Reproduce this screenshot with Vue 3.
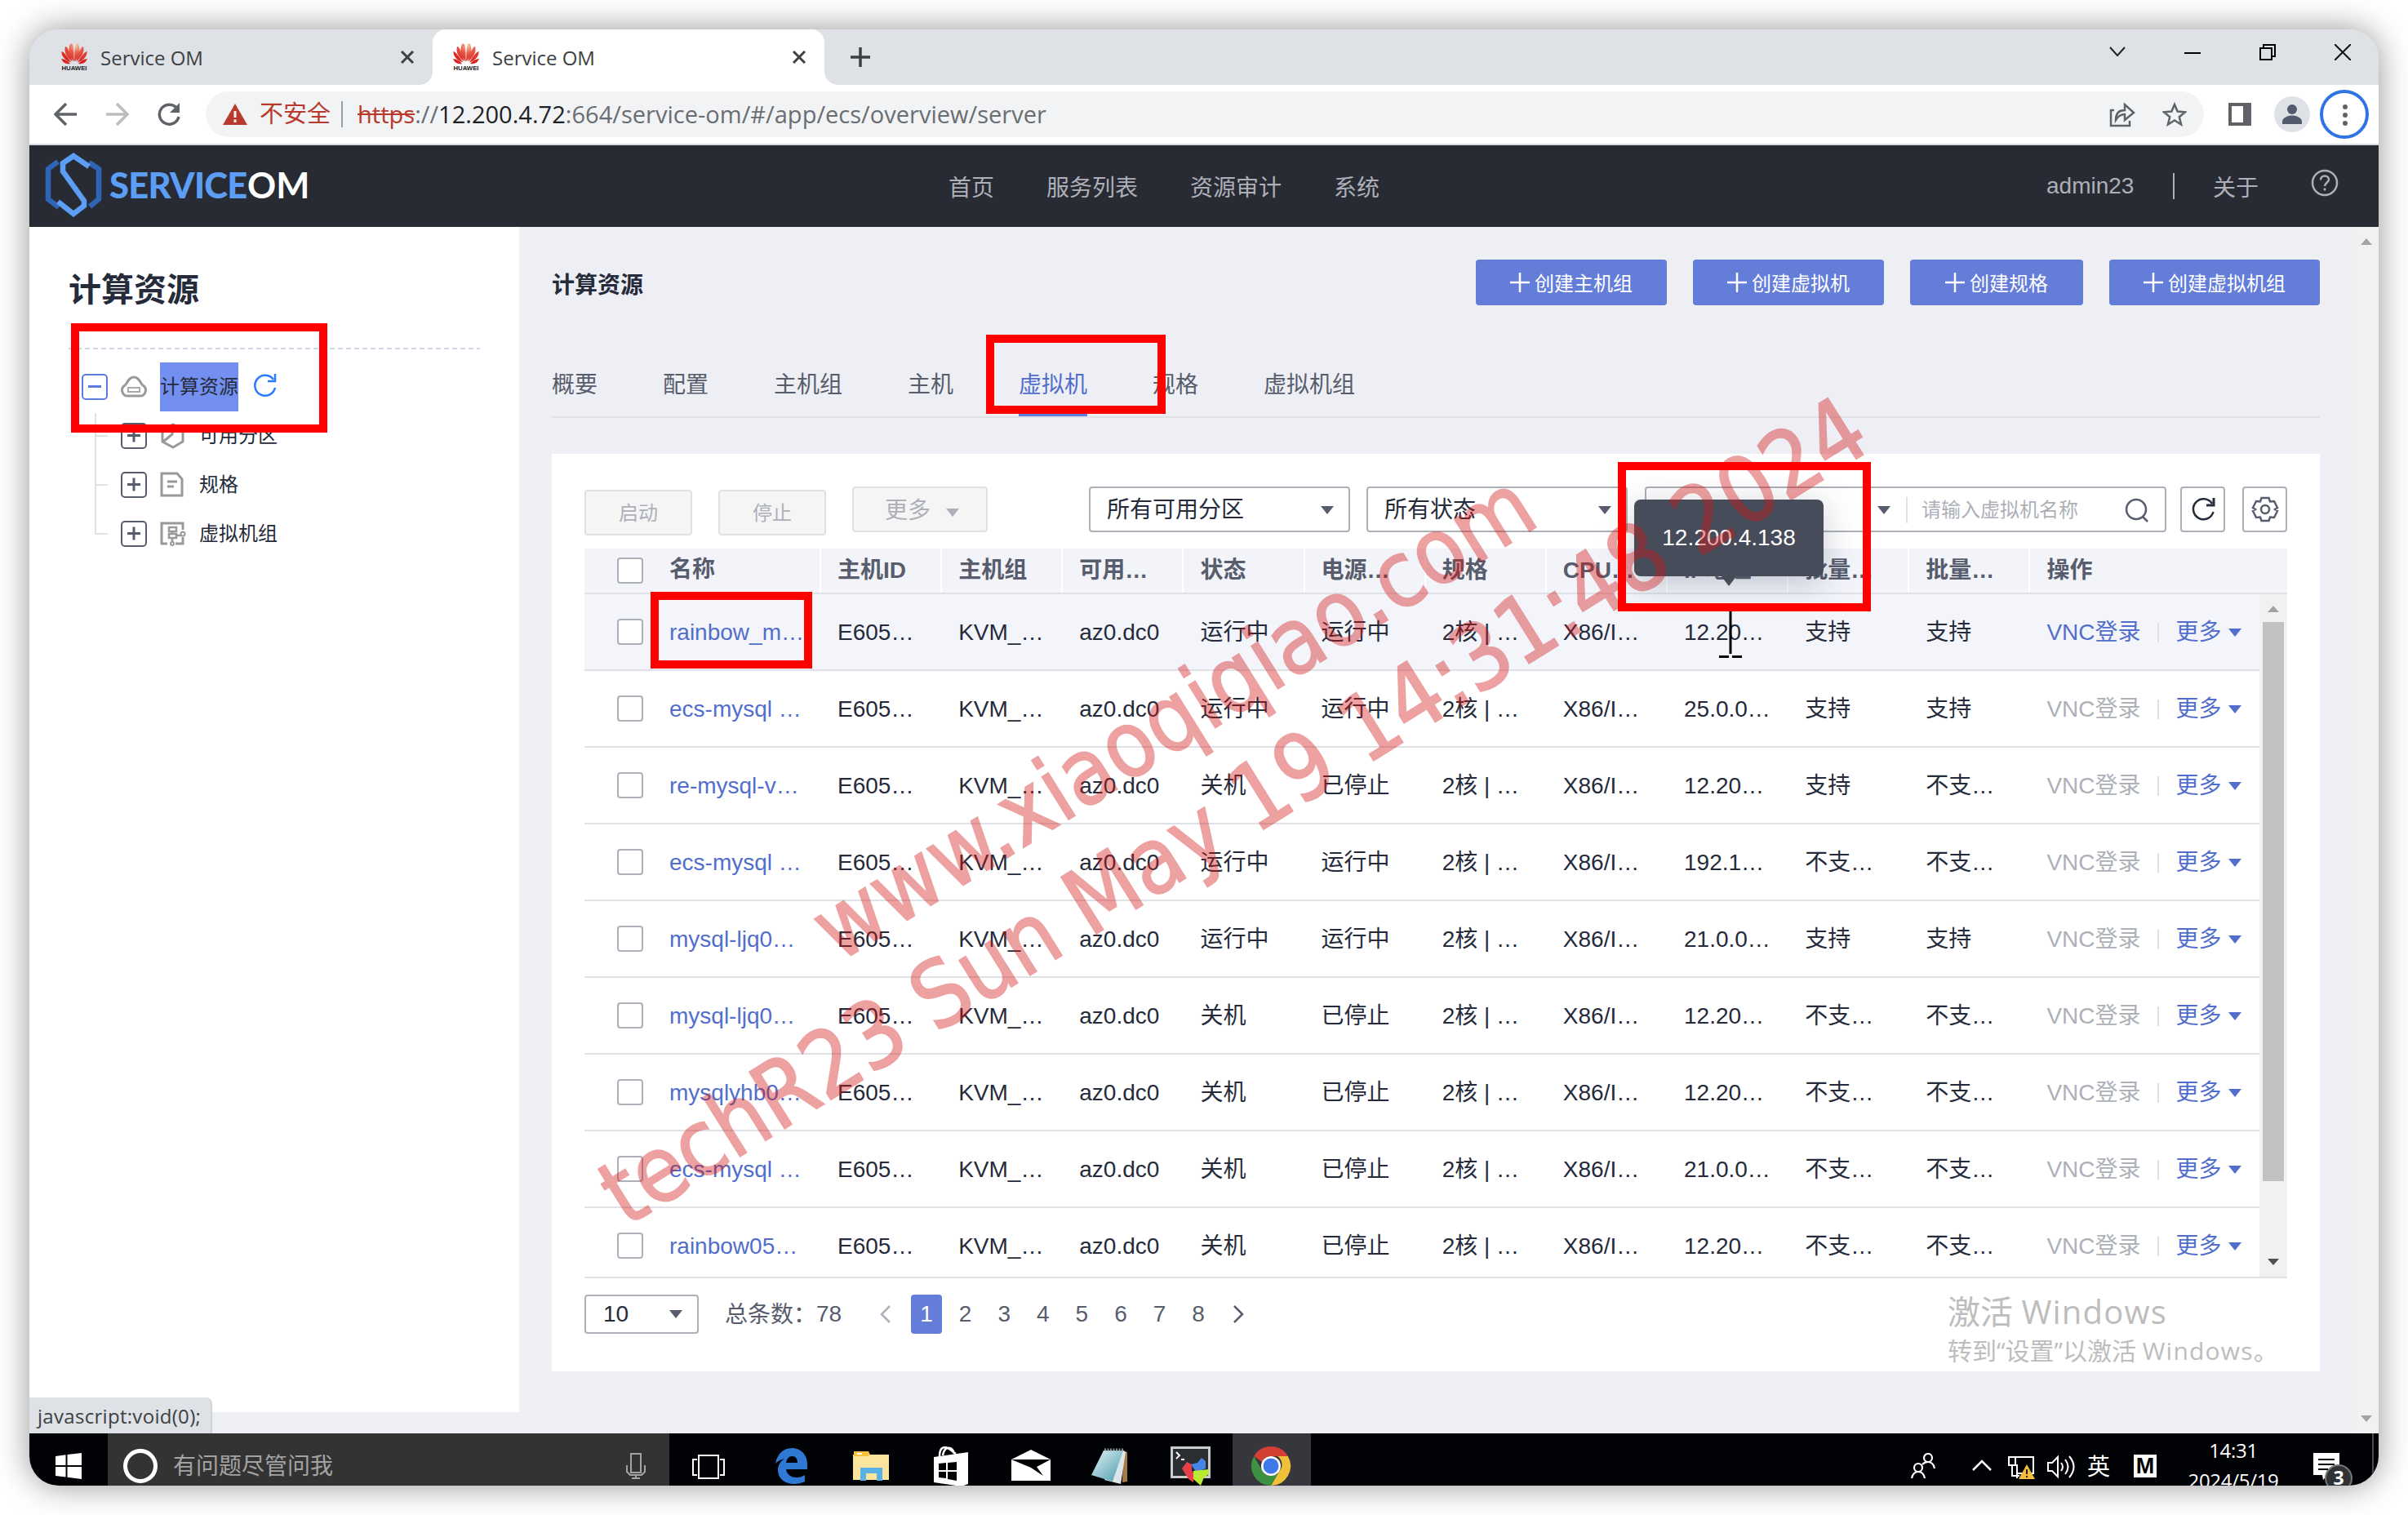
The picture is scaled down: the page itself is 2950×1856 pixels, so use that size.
<script setup>
const browserTabs = [
  { title: 'Service OM', active: false },
  { title: 'Service OM', active: true },
]
const nav = ['首页', '服务列表', '资源审计', '系统']
const actions = ['创建主机组', '创建虚拟机', '创建规格', '创建虚拟机组']
const tabs = ['概要', '配置', '主机组', '主机', '虚拟机', '规格', '虚拟机组']
const tree = [
  { label: '可用分区', icon: 'zone' },
  { label: '规格', icon: 'spec' },
  { label: '虚拟机组', icon: 'group' },
]
const heads = ['主机ID', '主机组', '可用…', '状态', '电源…', '规格', 'CPU…', 'IP地址', '批量…', '批量…']
const make = (name, on, ip, a, b) => ({
  name,
  cells: ['E605…', 'KVM_…', 'az0.dc0', on ? '运行中' : '关机', on ? '运行中' : '已停止', '2核 | …', 'X86/I…', ip, a, b],
})
const rows = [
  make('rainbow_m…', true, '12.20…', '支持', '支持'),
  make('ecs-mysql …', true, '25.0.0…', '支持', '支持'),
  make('re-mysql-v…', false, '12.20…', '支持', '不支…'),
  make('ecs-mysql …', true, '192.1…', '不支…', '不支…'),
  make('mysql-ljq0…', true, '21.0.0…', '支持', '支持'),
  make('mysql-ljq0…', false, '12.20…', '不支…', '不支…'),
  make('mysqlyhb0…', false, '12.20…', '不支…', '不支…'),
  make('ecs-mysql …', false, '21.0.0…', '不支…', '不支…'),
  make('rainbow05…', false, '12.20…', '不支…', '不支…'),
]
</script>

<template>
  <div class="stage">
    <div class="window">
      <!-- tab strip -->
      <div class="strip">
        <div v-for="(t, i) in browserTabs" :key="i" class="btab" :class="{ active: t.active }">
          <svg class="fav" width="34" height="34" viewBox="0 0 34 34">
            <defs>
              <radialGradient id="hw" gradientUnits="userSpaceOnUse" cx="19" cy="3" r="20">
                <stop offset="0" stop-color="#f6c9a4" /><stop offset=".45" stop-color="#ea5a48" /><stop offset="1" stop-color="#d5271f" />
              </radialGradient>
            </defs>
            <path fill="url(#hw)" d="M16 22C11 15 9 8 12 1c3-2 5 1 4.600 21zM18 22C23 15 25 8 22 1c-3-2-5 1-4.600 21zM14.500 22.500C8 17 4 11 6 4c3 0 6 8 8.500 18.500zM19.500 22.500C26 17 30 11 28 4c-3 0-6 8-8.500 18.500zM13 23.500C6 21 1 16 1.500 10 5 11 9 17 13 23.500zM21 23.500C28 21 33 16 32.500 10 29 11 25 17 21 23.500zM12 25C7 26 3 24 1 19c4 0 8 2.500 11 6zM22 25c5 1 9-1 11-6-4 0-8 2.500-11 6z" />
            <text x="17" y="32.500" text-anchor="middle" textLength="31" lengthAdjust="spacingAndGlyphs" class="favtext">HUAWEI</text>
          </svg>
          <span class="btitle">{{ t.title }}</span>
          <svg class="bclose" width="16" height="16" viewBox="0 0 16 16"><path d="M1 1l14 14M15 1L1 15" stroke="#3c4043" stroke-width="3" /></svg>
        </div>
        <svg class="plus" width="24" height="24" viewBox="0 0 24 24"><path d="M12 0v24M0 12h24" stroke="#3c4043" stroke-width="3.500" /></svg>
        <div class="wctl">
          <svg width="20" height="20" viewBox="0 0 20 20"><path d="M1 4l9 10 9-10" fill="none" stroke="#222" stroke-width="2" /></svg>
          <svg width="20" height="20" viewBox="0 0 20 20"><path d="M0 11h20" stroke="#000" stroke-width="2" /></svg>
          <svg width="20" height="20" viewBox="0 0 20 20"><path d="M1 5h14v14H1zM5 5V1h14v14h-4" fill="none" stroke="#000" stroke-width="2" /></svg>
          <svg width="20" height="20" viewBox="0 0 20 20"><path d="M0 0l20 20M20 0L0 20" stroke="#111" stroke-width="2" /></svg>
        </div>
      </div>

      <!-- address bar -->
      <div class="toolbar">
        <svg class="back" width="28" height="28" viewBox="0 0 28 28"><path d="M28 14H3M15 1L2 14l13 13" fill="none" stroke="#5f6368" stroke-width="3.500" /></svg>
        <svg class="fwd" width="28" height="28" viewBox="0 0 28 28"><path d="M0 14h25M13 1l13 13-13 13" fill="none" stroke="#bbbdc0" stroke-width="3.500" /></svg>
        <svg class="rel" width="30" height="30" viewBox="0 0 30 30"><path d="M25 8A12 12 0 1 0 27 18" fill="none" stroke="#5f6368" stroke-width="3.500" /><path d="M28 1v12H16z" fill="#5f6368" /></svg>
        <div class="omni">
          <svg class="warn" width="30" height="26" viewBox="0 0 30 26"><path d="M15 0L30 26H0z" fill="#b93a2c" /><path d="M15 9v8M15 19.500v3.500" stroke="#f1f3f4" stroke-width="3" /></svg>
          <span class="unsafe">不安全</span>
          <i class="osep"></i>
          <span class="url"><s>https</s>://<b>12.200.4.72</b>:664/service-om/#/app/ecs/overview/server</span>
          <svg class="share" width="32" height="32" viewBox="0 0 32 32"><path d="M6 11H2v19h23v-6M8 23c0-9 5-12 11-12V4l11 10-11 9v-7c-5 0-8 2-11 7z" fill="none" stroke="#5f6368" stroke-width="2.500" /></svg>
          <svg class="star" width="30" height="30" viewBox="0 0 30 30"><path d="M15 3l3.600 8.600 9.400.7-7.200 6 2.300 9.200-8.100-5-8.100 5 2.300-9.200-7.200-6 9.400-.7z" fill="none" stroke="#5f6368" stroke-width="2.500" /></svg>
        </div>
        <svg class="panel" width="28" height="28" viewBox="0 0 28 28"><path d="M2 2h24v24H2z" fill="none" stroke="#5f6368" stroke-width="4" /><path d="M18 2h8v24h-8z" fill="#5f6368" /></svg>
        <svg class="avatar" width="44" height="44" viewBox="0 0 44 44"><circle cx="22" cy="22" r="22" fill="#dee1e6" /><circle cx="22" cy="16" r="6" fill="#525c6e" /><path d="M10 34v-3c0-5 7-7.500 12-7.500S34 26 34 31v3z" fill="#525c6e" /></svg>
        <svg class="menu" width="60" height="60" viewBox="0 0 60 60"><circle cx="30" cy="30" r="28" fill="#fff" stroke="#2e74e5" stroke-width="4" /><circle cx="31" cy="21" r="3" fill="#5f6368" /><circle cx="31" cy="31" r="3" fill="#5f6368" /><circle cx="31" cy="41" r="3" fill="#5f6368" /></svg>
      </div>

      <!-- application header -->
      <header class="head">
        <svg class="logo" width="72" height="80" viewBox="0 0 72 80">
          <path d="M17 12L5 21v37l13 10" fill="none" stroke="#2e66b5" stroke-width="6.500" />
          <path d="M55 13l12 8v37L56 67" fill="none" stroke="#2e66b5" stroke-width="6.500" />
          <path d="M55 18L36 5 23 14v10l26 36v6L36 76 17 61" fill="none" stroke="#5c9df5" stroke-width="6.500" />
        </svg>
        <span class="brand"><b>SERVICE</b><i>OM</i></span>
        <nav><a v-for="n in nav" :key="n">{{ n }}</a></nav>
        <span class="user">admin23</span>
        <i class="hsep"></i>
        <span class="about">关于</span>
        <svg class="help" width="34" height="34" viewBox="0 0 34 34"><circle cx="17" cy="17" r="15" fill="none" stroke="#adb0b8" stroke-width="2.500" /><path d="M12 13.500c0-3 2-5 5-5s5 2 5 4.500c0 3.500-5 4-5 8M17 23.500v3" fill="none" stroke="#adb0b8" stroke-width="2.500" /></svg>
      </header>

      <div class="body">
        <aside>
          <h1>计算资源</h1>
          <div class="dash"></div>
          <div class="tree">
            <div class="node root">
              <span class="tog minus"></span>
              <svg class="nico" width="32" height="32" viewBox="0 0 32 32"><path d="M9 27a7 7 0 0 1-4-13C8 12 9 4 16 4s8 8 11 10a7 7 0 0 1-4 13z" fill="none" stroke="#999" stroke-width="3" /><path d="M9 17h14v5H9z" fill="none" stroke="#aaa" stroke-width="2" /></svg>
              <span class="lbl sel">计算资源</span>
              <svg class="rico" width="30" height="30" viewBox="0 0 30 30"><path d="M26 8A12.500 12.500 0 1 0 28 18" fill="none" stroke="#2b7bff" stroke-width="2.500" /><path d="M28 1v9h-9" fill="none" stroke="#2b7bff" stroke-width="2.500" /></svg>
            </div>
            <div v-for="n in tree" :key="n.label" class="node child">
              <span class="tog"></span>
              <svg class="nico" width="32" height="32" viewBox="0 0 32 32" fill="none" stroke="#999" stroke-width="3">
                <path v-if="n.icon === 'zone'" d="M16 2L3 8v15l13 7 12-7V8zM4 23l11-9V2" />
                <template v-else-if="n.icon === 'spec'"><path d="M2 2h19l6 7v20H2z" /><path d="M9 12h12M9 18h8" /></template>
                <template v-else><path d="M9 28H2V3h26v8M28 20v8h-9" /><path d="M11 8h9v5h-9zM11 16h9v5h-9zM15 13v3M15 21v6M20 18h6" stroke-width="2.500" /><circle cx="15" cy="28" r="2" stroke-width="2" /><circle cx="28" cy="16" r="2.500" stroke-width="2" /></template>
              </svg>
              <span class="lbl">{{ n.label }}</span>
            </div>
          </div>
        </aside>

        <main>
          <div class="top">
            <h2>计算资源</h2>
            <div class="acts">
              <button v-for="a in actions" :key="a"><svg width="24" height="24" viewBox="0 0 24 24"><path d="M12 0v24M0 12h24" stroke="#fff" stroke-width="2.500" /></svg>{{ a }}</button>
            </div>
          </div>
          <div class="tabs"><span v-for="t in tabs" :key="t" :class="{ on: t === '虚拟机' }">{{ t }}</span></div>

          <section class="card">
            <div class="tools">
              <span class="btn b1">启动</span>
              <span class="btn b1 b2">停止</span>
              <span class="btn b3">更多<i class="car"></i></span>
              <span class="select s1">所有可用分区<i class="car"></i></span>
              <span class="select s2">所有状态<i class="car"></i></span>
              <span class="search">
                <i class="car"></i><i class="vsep"></i><span class="ph">请输入虚拟机名称</span>
                <svg width="32" height="32" viewBox="0 0 32 32"><circle cx="15" cy="15" r="12" fill="none" stroke="#575d6c" stroke-width="2.500" /><path d="M23 24l6 6" stroke="#575d6c" stroke-width="2.500" /></svg>
              </span>
              <span class="sq q1"><svg width="30" height="30" viewBox="0 0 30 30"><path d="M26 8A12.500 12.500 0 1 0 27.500 18" fill="none" stroke="#252b3a" stroke-width="2.500" /><path d="M28 1v9h-9" fill="none" stroke="#252b3a" stroke-width="3" /></svg></span>
              <span class="sq q2"><svg width="34" height="34" viewBox="0 0 34 34" fill="none" stroke="#575d6c" stroke-width="2.500"><path d="M12.500 3h9l1.500 4.500 5-.5 4 8-3 2 3 2-4 8-5-.5-1.500 4.500h-9L11 26.500 6 27l-4-8 3-2-3-2 4-8 5 .5z" /><circle cx="17" cy="17" r="5" /></svg></span>
            </div>

            <div class="table">
              <div class="tr th">
                <div class="c0"><i class="cb"></i><span>名称</span></div>
                <div v-for="(h, i) in heads" :key="i" class="td">{{ h }}</div>
                <div class="td op">操作</div>
              </div>
              <div class="scroll">
                <div class="rows">
                  <div v-for="(r, i) in rows" :key="i" class="tr" :class="{ hot: i === 0 }">
                    <div class="c0"><i class="cb"></i><a>{{ r.name }}</a></div>
                    <div v-for="(c, j) in r.cells" :key="j" class="td">{{ c }}</div>
                    <div class="td op"><a class="vnc">VNC登录</a><i class="osp"></i><a>更多</a><i class="car"></i></div>
                  </div>
                </div>
                <div class="bar"><i class="up"></i><i class="thumb"></i><i class="down"></i></div>
              </div>
            </div>

            <div class="pager">
              <span class="size">10<i class="car"></i></span>
              <span class="total">总条数：</span><span class="cnt">78</span>
              <svg class="pv" width="16" height="22" viewBox="0 0 16 22"><path d="M13 1L3 11l10 10" fill="none" stroke="#adb0b8" stroke-width="2.500" /></svg>
              <span v-for="p in 8" :key="p" class="pg" :class="{ cur: p === 1 }">{{ p }}</span>
              <svg class="nx" width="16" height="22" viewBox="0 0 16 22"><path d="M3 1l10 10L3 21" fill="none" stroke="#575d6c" stroke-width="2.500" /></svg>
            </div>
          </section>
        </main>
        <div class="pagebar"><i class="up"></i><i class="down"></i></div>
        <div class="status">javascript:void(0);</div>
      </div>

      <!-- taskbar -->
      <footer class="task">
        <svg class="win" width="32" height="32" viewBox="0 0 32 32" fill="#fff"><path d="M0 4l12.500-1.700V15H0zM14.500 2L32 0v15H14.500zM0 17h12.500v12.500L0 28zM14.500 17H32v15l-17.500-2.200z" /></svg>
        <div class="cortana">
          <svg width="44" height="44" viewBox="0 0 44 44"><circle cx="22" cy="22" r="18.500" fill="none" stroke="#fff" stroke-width="5" /></svg>
          <span>有问题尽管问我</span>
          <svg class="mic" width="24" height="32" viewBox="0 0 24 32" fill="none" stroke="#a3a3a3" stroke-width="2"><path d="M6 1h12v23H6zM1 15v8l4 4h14l4-4v-8M12 27v4M7 31h10" /></svg>
        </div>
        <svg class="tv" width="40" height="30" viewBox="0 0 40 30" fill="none" stroke="#fff" stroke-width="2"><path d="M8 1h24v28H8zM6 6H1v19h5M34 6h5v19h-5" /></svg>
        <svg class="i1" width="40" height="44" viewBox="0 0 40 44"><path fill="#2f78d4" d="M1 19C3 7 11 0 21 0c12 0 19 9 19 20v6H14c1 7 7 10 13 10 4 0 7-1 10-3v8c-4 2-8 3-13 3C12 44 4 37 4 27c0-6 3-11 8-14-5 1-8 3-11 6zM14 18h14c0-5-2-8-6.500-8S15 13 14 18z" /></svg>
        <svg class="i2" width="44" height="36" viewBox="0 0 44 36"><path fill="#f9c23c" d="M1 0h18v8H1z" /><path fill="#fbe49b" d="M0 4h44v31H0z" /><path fill="#f9c23c" d="M1 0h18l2 4-3 2H1z" /><path fill="#fff" d="M5 2h6v2H5z" /><path fill="#5ab1e6" d="M9 20h27v16h-7v-9H16v9H9z" /></svg>
        <svg class="i3" width="44" height="48" viewBox="0 0 44 48"><path fill="none" stroke="#fff" stroke-width="2.500" d="M8 12C8 4 11 1 15 1s8 5 13 8M12 11c2-12 12-12 14-2" /><path fill="#fff" d="M1 13l42-6v39l-8 3L1 44z" /><path fill="#000" d="M7 21l9-1v9H7zM18 20l11-1v10H18zM7 31h9v8l-9-1zM18 31h11v11l-11-2z" /></svg>
        <svg class="i4" width="48" height="38" viewBox="0 0 48 38"><path fill="#fff" d="M24 0l22 11 2 1v26H0V12z" /><path fill="#000" d="M0 12h48L31 21l8 11-15-10z" /></svg>
        <svg class="i5" width="46" height="44" viewBox="0 0 46 44"><defs><linearGradient id="np" x1="0" y1="0" x2="1" y2="1"><stop offset="0" stop-color="#e3f5f8" /><stop offset="1" stop-color="#4a98ab" /></linearGradient></defs><path fill="#a77b46" d="M39 3l5 2v36l-6 1z" /><path fill="#dde5ea" d="M38 2l4 3-6 39-20-5z" /><path fill="url(#np)" d="M15 3h24L26 41 0 33z" /><path stroke="#8b8f92" stroke-width="3" stroke-dasharray="2 1.500" d="M16 2h24" /></svg>
        <svg class="i6" width="50" height="48" viewBox="0 0 50 48"><path d="M1.500 1.500h46v36h-46z" fill="#2c2f31" stroke="#c9cbcc" stroke-width="3" /><path d="M7 7l4 4-4 4M13 16h4" fill="none" stroke="#fff" stroke-width="2" /><path fill="#e8404a" d="M14 27l6-8 6 3v8l3 3-1 11-6-4z" /><path fill="#4585e8" d="M25 22l8-2 5-6 5 4v9l-8 3-3 2z" /><path fill="#b9ea31" d="M28 30l19-2v6l-6 4-4 10-9-8z" /></svg>
        <div class="chromebox">
          <svg width="50" height="50" viewBox="0 0 50 50"><path fill="#d43f33" d="M4.200 13A24 24 0 0 1 45.800 13H25A12 12 0 0 0 14 20z" /><path fill="#f0c03a" d="M45.800 13A24 24 0 0 1 25 49L35.500 31A12 12 0 0 0 33 13z" /><path fill="#3f9142" d="M4.200 13A24 24 0 0 0 25 49L35.400 31A12 12 0 0 1 14.600 31z" /><circle cx="25" cy="25" r="12" fill="#fff" /><circle cx="25" cy="25" r="9.500" fill="#3f78e8" /></svg>
        </div>
        <div class="tray">
          <svg class="t1" width="30" height="32" viewBox="0 0 30 32" fill="none" stroke="#fff" stroke-width="2.200"><circle cx="21" cy="6" r="5" /><circle cx="9" cy="18" r="5" /><path d="M14 14c2-2 4-3 7-3 4 0 7 3 8 8M1 31c1-5 4-8 8-8s7 3 8 8" /></svg>
          <svg class="t2" width="24" height="14" viewBox="0 0 24 14"><path d="M1 13L12 2l11 11" fill="none" stroke="#fff" stroke-width="2.500" /></svg>
          <svg class="t3" width="34" height="30" viewBox="0 0 34 30"><path d="M8 2h23v20H11V11M1 2h8v10H1zM5 12v13h9M11 22v6" fill="none" stroke="#fff" stroke-width="2" /><path d="M23 11l10 18H13z" fill="#f5bd3c" /><path d="M23 17v6M23 25v2" stroke="#222" stroke-width="2" /></svg>
          <svg class="t4" width="34" height="30" viewBox="0 0 34 30" fill="none" stroke="#fff" stroke-width="2"><path d="M1 10h5l7-7v24l-7-7H1zM17 10q4 5 0 10M22 6q7 9 0 18M27 2q11 13 0 26" /></svg>
          <span class="ying">英</span>
          <span class="mbox">M</span>
          <div class="clock"><span>14:31</span><span>2024/5/19</span></div>
          <svg class="t5" width="50" height="42" viewBox="0 0 50 42"><path fill="#fff" d="M0 0h32v27H17l-5 6-1-6H0z" /><path d="M6 8h20M6 14h20M6 20h12" stroke="#000" stroke-width="2" /><circle cx="31" cy="31" r="16" fill="#303234" stroke="#777" stroke-width="2" /><text x="31" y="39" text-anchor="middle" class="three">3</text></svg>
          <i class="edge"></i>
        </div>
      </footer>
    </div>

    <!-- floating layers -->
    <div class="tip">12.200.4.138</div>
    <svg class="cursor" width="30" height="62" viewBox="0 0 30 62"><path d="M15 0v56M1 59.500h12M17 59.500h12" stroke="#000" stroke-width="3" fill="none" /></svg>
    <svg class="mark" width="2950" height="1856" viewBox="0 0 2950 1856">
      <text transform="translate(1027 1180) rotate(-32)" textLength="1016" lengthAdjust="spacingAndGlyphs">www.xiaoqiqiao.com</text>
      <text transform="translate(767 1504) rotate(-32)" textLength="1803" lengthAdjust="spacingAndGlyphs">techR23 Sun May 19 14:31:48 2024</text>
    </svg>
    <div class="activate"><p>激活 <span>Windows</span></p><p>转到“设置”以激活 <span>Windows</span>。</p></div>
    <i class="red r1"></i><i class="red r2"></i><i class="red r3"></i><i class="red r4"></i>
  </div>
</template>

<style>
body { background: #fff; }
</style>

<style scoped>
* { box-sizing: border-box; }
svg { display: block; flex: none; }
i { font-style: normal; }
.stage { position: relative; width: 2950px; height: 1856px; padding: 36px; overflow: hidden; background: #fff; font-family: "Liberation Sans", "Noto Sans CJK SC", sans-serif; font-size: 28px; color: #252b3a; }
.window { width: 2878px; height: 1784px; border-radius: 36px; overflow: hidden; box-shadow: 0 0 40px rgba(0, 0, 0, .42); display: flex; flex-direction: column; background: #eeeff5; }
.window > * { flex: none; }

.strip { height: 68px; background: #dee1e6; display: flex; font-family: "Open Sans", sans-serif; font-size: 24px; color: #3c4043; }
.btab { position: relative; width: 480px; height: 68px; display: flex; align-items: center; padding-left: 24px; }
.btab:first-child { width: 494px; padding-left: 38px; }
.btab.active { background: #fff; border-radius: 16px 16px 0 0; }
.btab.active::before, .btab.active::after { content: ""; position: absolute; bottom: 0; width: 16px; height: 16px; }
.btab.active::before { left: -16px; background: radial-gradient(circle at 0 0, transparent 15.5px, #fff 16px); }
.btab.active::after { right: -16px; background: radial-gradient(circle at 100% 0, transparent 15.5px, #fff 16px); }
.fav { overflow: visible; }
.favtext { font: bold 7px "Liberation Sans", sans-serif; fill: #222; }
.btitle { margin-left: 15px; width: 368px; padding-top: 1px; white-space: nowrap; }
.plus { margin: 22px 0 0 32px; }
.wctl { margin: 18px 34px 0 auto; display: flex; gap: 72px; }

.toolbar { height: 74px; background: #fff; border-bottom: 2px solid #d9dcdf; display: flex; align-items: center; }
.back { margin-left: 30px; }
.fwd { margin-left: 36px; }
.rel { margin-left: 34px; }
.omni { margin-left: 30px; width: 2448px; height: 56px; border-radius: 28px; background: #f1f3f4; display: flex; align-items: center; }
.warn { margin-left: 21px; }
.unsafe { margin-left: 15px; width: 86px; color: #b93a2c; font-size: 29px; line-height: 40px; white-space: nowrap; }
.osep { width: 2px; height: 32px; background: #9a9da1; margin: 0 18px 0 14px; }
.url { font-family: "Open Sans", sans-serif; font-size: 29px; color: #6a6d71; letter-spacing: .02px; white-space: nowrap; padding-bottom: 2px; }
.url s { color: #b93a2c; }
.url b { font-weight: 400; color: #202124; }
.share { margin-left: auto; }
.star { margin: 0 21px 0 33px; }
.panel { margin-left: 30px; }
.avatar { margin-left: 28px; }
.menu { margin-left: 12px; }

.head { height: 100px; background: #282b33; color: #adb0b8; display: flex; align-items: center; }
.logo { margin: -4px 0 0 18px; }
.brand { display: flex; margin-left: 8px; width: 250px; font: bold 43.500px "Lato", sans-serif; white-space: nowrap; padding-bottom: 4px; }
.brand b { color: #5c9df5; width: 169px; letter-spacing: -.7px; }
.brand i { color: #fff; }
.head nav { display: flex; gap: 64px; margin-left: 778px; width: 1345px; line-height: 40px; padding-top: 6px; }
.user { width: 155px; white-space: nowrap; }
.hsep { width: 2px; height: 32px; background: #adb0b8; }
.about { margin-left: 47px; width: 120px; line-height: 40px; padding-top: 6px; }
.help { margin-top: -8px; }

.body { position: relative; height: 1478px; display: flex; }
aside { width: 600px; height: 1452px; background: #fff; }
h1 { margin: 47px 0 0 48px; font-size: 40px; line-height: 60px; }
.dash { margin: 41px 0 0 48px; width: 504px; height: 2px; background: repeating-linear-gradient(90deg, #d3d8e8 0 6px, transparent 6px 10px); }
.tree { position: relative; margin: 16px 0 0 64px; font-size: 24px; }
.tree::before { content: ""; position: absolute; left: 16px; top: 62px; width: 2px; height: 148px; background: #dfe1e6; }
.node { height: 60px; display: flex; align-items: center; position: relative; }
.child { padding-left: 48px; }
.child::before { content: ""; position: absolute; left: 16px; top: 29px; width: 16px; height: 2px; background: #dfe1e6; }
.tog { position: relative; width: 32px; height: 32px; border: 2px solid #575d6c; border-radius: 5px; }
.tog::before, .child .tog::after { content: ""; position: absolute; left: 6px; top: 12px; width: 16px; height: 3px; background: #575d6c; }
.child .tog::after { transform: rotate(90deg); }
.minus { border-color: #5e7ce0; }
.minus::before { background: #5e7ce0; }
.nico { margin-left: 16px; }
.lbl { margin-left: 16px; line-height: 60px; white-space: nowrap; }
.sel { background: #7390f0; width: 96px; }
.rico { margin-left: 17px; margin-top: -4px; }

main { width: 2245px; padding: 40px 39px 0 40px; }
.top { display: flex; justify-content: space-between; height: 56px; }
h2 { margin: 12px 0 0; font-size: 28px; line-height: 40px; }
.acts { display: flex; gap: 32px; }
.acts button { min-width: 212px; height: 56px; border: 0; border-radius: 4px; background: #647dd9; color: #fff; font: 24px/36px "Noto Sans CJK SC", sans-serif; display: flex; align-items: center; justify-content: center; gap: 6px; padding: 0 42px; white-space: nowrap; }
.acts button:nth-child(3) { padding: 0 40px; }
.tabs { height: 138px; border-bottom: 2px solid #dfe1e6; display: flex; gap: 80px; align-items: flex-end; color: #575d6c; }
.tabs span { height: 60px; line-height: 44px; border-bottom: 4px solid transparent; }
.tabs .on { color: #526ecc; border-color: #5e7ce0; }

.card { margin-top: 44px; height: 1124px; background: #fff; padding: 40px 40px 0; }
.tools { display: flex; height: 76px; }
.tools > span { flex: none; height: 56px; border: 2px solid #adb0b8; border-radius: 4px; display: flex; align-items: center; line-height: 40px; white-space: nowrap; padding-top: 1px; }
.tools > .btn { background: #f5f5f6; border-color: #dfe1e6; color: #adb0b8; justify-content: center; }
.tools > .b1 { width: 132px; margin-top: 4px; font-size: 24px; }
.tools > .b2 { margin-left: 32px; }
.tools > .b3 { width: 166px; margin-left: 32px; padding: 4px 0 0 5px; }
.car { width: 0; height: 0; border: 8px solid transparent; border-top: 10px solid #575d6c; border-bottom: 0; }
.b3 .car { border-top-color: #adb0b8; margin: 4px 0 0 19px; }
.tools > .select { width: 320px; padding: 1px 18px 0 20px; justify-content: space-between; }
.tools > .s1 { margin-left: 124px; }
.tools > .s2 { margin-left: 20px; }
.tools > .search { width: 639px; margin-left: 21px; padding-left: 283px; }
.vsep { width: 2px; height: 32px; background: #dfe1e6; margin: 0 17px 0 19px; }
.ph { font-size: 24px; color: #adb0b8; margin-right: 56px; }
.tools > .sq { width: 55px; justify-content: center; padding: 0; }
.tools > .q1 { margin-left: 17px; }
.tools > .q2 { margin-left: 21px; }

.tr { display: flex; align-items: center; height: 94px; border-bottom: 2px solid #dfe1e6; white-space: nowrap; }
.hot { background: #f3f5fb; }
.c0 { width: 288px; padding-left: 40px; display: flex; align-items: center; line-height: 40px; }
.c0 a { padding-top: 2px; }
.cb { width: 32px; height: 32px; border: 2px solid #adb0b8; border-radius: 4px; background: #fff; margin-right: 32px; }
.td { width: 148.15px; padding: 2px 0 0 22px; line-height: 40px; display: flex; align-items: center; }
.op { width: 280px; }
.th { height: 56px; background: #f3f4fa; color: #575d6c; font-weight: bold; }
.th .c0 span { padding-bottom: 2px; }
.th .td { border-left: 2px solid #fff; height: 54px; padding: 0 0 0 20px; }
.tr a { color: #526ecc; }
.tr:not(.hot) .vnc { color: #adb0b8; }
.vnc { width: 136px; }
.osp { width: 2px; height: 24px; background: #dfe1e6; margin-right: 20px; }
.op .car { border-top-color: #526ecc; margin-left: 9px; }
.scroll { display: flex; height: 838px; overflow: hidden; border-bottom: 2px solid #dfe1e6; }
.rows { width: 2052px; }
.bar { width: 34px; height: 836px; background: #f1f1f1; display: flex; flex-direction: column; align-items: center; }
.up { width: 0; height: 0; border: 7px solid transparent; border-top: 0; border-bottom: 8px solid #a3a3a3; }
.down { width: 0; height: 0; border: 7px solid transparent; border-bottom: 0; border-top: 8px solid #505050; }
.bar .up { margin-top: 14px; }
.thumb { width: 26px; height: 685px; background: #c1c1c1; margin: 12px 0 auto; }
.bar .down { margin-bottom: 14px; }

.pager { display: flex; align-items: center; margin-top: 20px; height: 48px; color: #575d6c; line-height: 40px; }
.size { width: 140px; height: 48px; border: 2px solid #adb0b8; border-radius: 4px; display: flex; align-items: center; justify-content: space-between; padding: 0 18px 0 21px; color: #252b3a; }
.total { margin-left: 32px; width: 112px; white-space: nowrap; padding-top: 2px; }
.cnt { width: 77px; }
.pv { margin-right: 23px; }
.pg { width: 38px; height: 48px; line-height: 48px; text-align: center; margin-right: 9.600px; }
.cur { background: #647dd9; color: #fff; border-radius: 4px; }
.nx { margin-left: 12px; }

.pagebar { width: 33px; height: 1478px; background: #f1f1f1; display: flex; flex-direction: column; justify-content: space-between; align-items: center; padding: 14px 0 14px 2px; }
.pagebar .down { border-top-color: #a3a3a3; }
.status { position: absolute; left: 0; bottom: 0; width: 224px; height: 44px; padding-left: 10px; background: #dee1e6; border-radius: 0 8px 0 0; font: 24px/46px "Open Sans", sans-serif; letter-spacing: .3px; color: #3c4043; border-right: 2px solid #cfd2d6; white-space: nowrap; }

.task { height: 64px; background: #000205; display: flex; align-items: flex-start; color: #fff; }
.win { margin: 24px 32px 0; }
.cortana { width: 688px; height: 64px; background: #333; display: flex; align-items: center; color: #a3a3a3; padding: 16px 29px 0 18px; line-height: 40px; }
.cortana span { margin-left: 18px; padding-top: 2px; }
.mic { margin: 0 0 8px auto; align-self: flex-end; }
.tv { margin: 26px 0 0 28px; }
.i1 { margin: 18px 0 0 61px; }
.i2 { margin: 22px 0 0 56px; }
.i3 { margin: 16px 0 0 54px; }
.i4 { margin: 20px 0 0 52px; }
.i5 { margin: 18px 0 0 50px; }
.i6 { margin: 16px 0 0 51px; }
.chromebox { width: 96px; height: 64px; background: #35373c; margin-left: 26px; padding: 15px 0 0 22px; overflow: hidden; }
.tray { margin-left: auto; display: flex; align-items: flex-start; height: 64px; overflow: hidden; }
.t1 { margin-top: 24px; }
.t2 { margin: 32px 0 0 45px; }
.t3 { margin: 27px 0 0 20px; }
.t4 { margin: 26px 0 0 14px; }
.ying { margin: 22px 0 0 15px; width: 57px; line-height: 40px; }
.mbox { margin-top: 26px; width: 28px; height: 28px; background: #fff; color: #000; font: bold 27px/28px "Liberation Sans", sans-serif; text-align: center; }
.clock { margin: 2px 0 0 27px; width: 134px; display: flex; flex-direction: column; align-items: center; font: 24px/37px "Open Sans", sans-serif; letter-spacing: -.3px; }
.t5 { margin: 24px 0 0 31px; }
.three { font: bold 23px "Open Sans", sans-serif; fill: #fff; }
.edge { width: 2px; height: 64px; background: #4a4c4f; margin: 0 6px 0 22px; }

.tip { position: absolute; left: 2002px; top: 612px; width: 232px; height: 94px; border-radius: 8px; background: #464c59; color: #fff; text-align: center; line-height: 94px; box-shadow: 0 8px 40px rgba(40, 50, 80, .25); }
.tip::after { content: ""; position: absolute; left: 106px; top: 93px; border: 10px solid transparent; border-top: 13px solid #464c59; border-bottom: 0; }
.cursor { position: absolute; left: 2105px; top: 745px; }
.mark { position: absolute; left: 0; top: 0; font: 112px "DejaVu Sans Condensed", "DejaVu Sans", sans-serif; font-stretch: condensed; fill: #d41616; stroke: #d41616; stroke-width: 2px; opacity: .4; }
.activate { position: absolute; left: 2386px; top: 1579px; color: #bdbdbd; font-family: "Open Sans", "Noto Sans CJK SC", sans-serif; white-space: nowrap; }
.activate p { margin: 0; font-size: 40px; line-height: 56px; }
.activate p + p { font-size: 30px; line-height: 40px; }
.activate span { letter-spacing: 1.2px; }
.red { position: absolute; border: 10px solid #f00; }
.r1 { left: 87px; top: 396px; width: 314px; height: 134px; }
.r2 { left: 1208px; top: 410px; width: 220px; height: 97px; }
.r3 { left: 1982px; top: 566px; width: 310px; height: 183px; }
.r4 { left: 797px; top: 725px; width: 198px; height: 94px; }
</style>
